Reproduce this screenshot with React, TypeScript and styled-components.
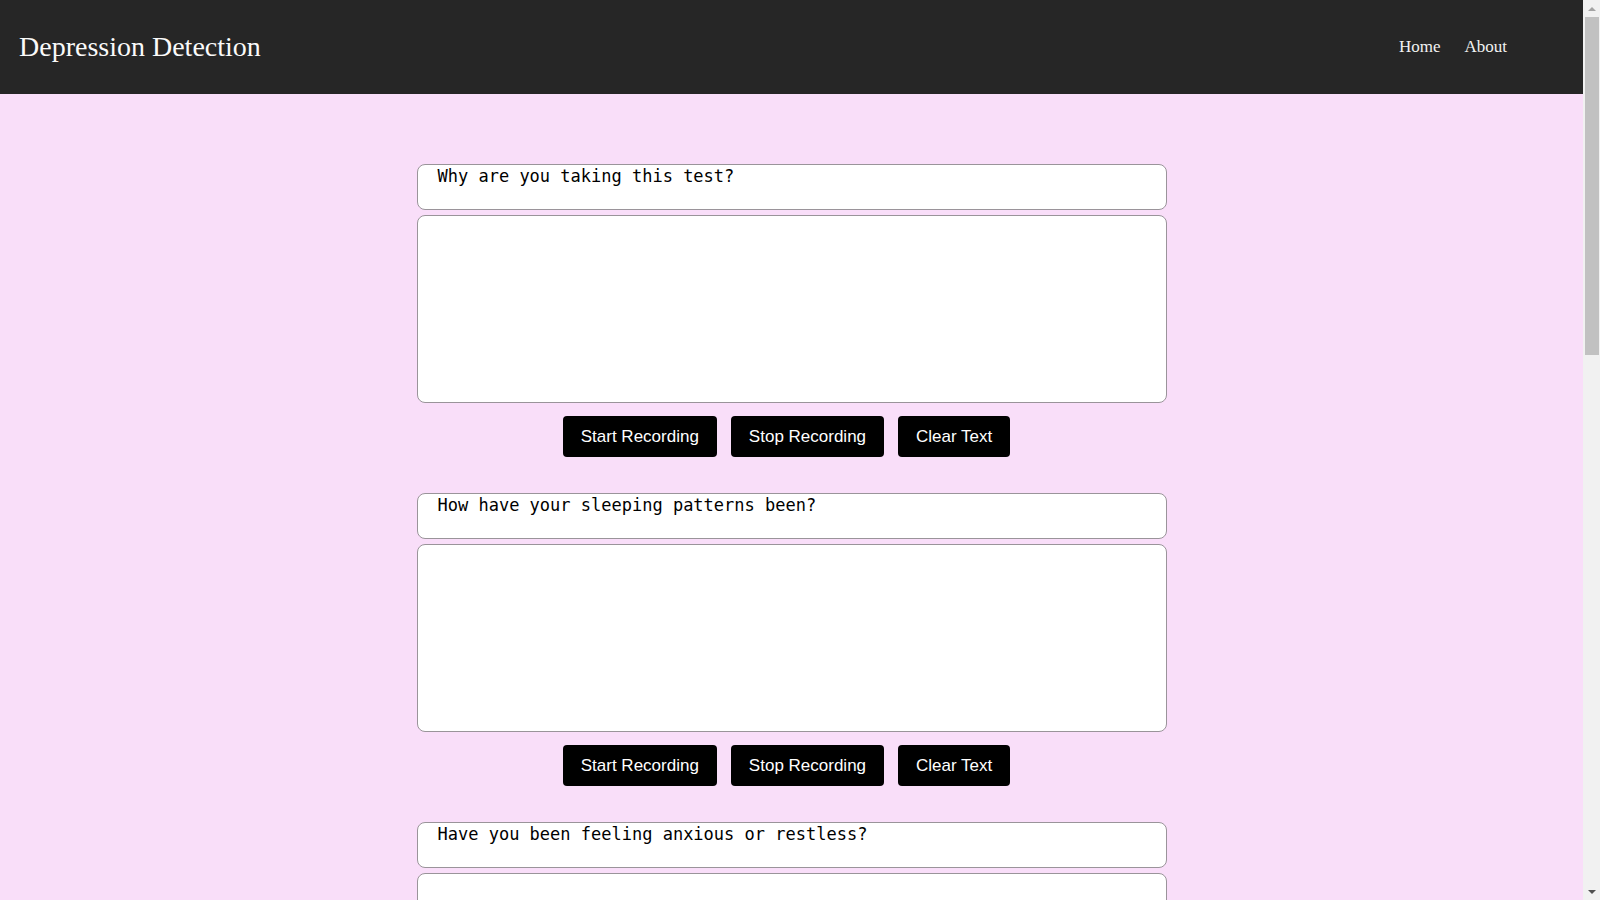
import React from "react";
import styled, { createGlobalStyle } from "styled-components";

const GlobalStyle = createGlobalStyle`
  html, body {
    margin: 0;
    padding: 0;
    background: #f9def9;
  }
  body {
    font-family: "Liberation Serif", "Times New Roman", serif;
  }
`;

const Page = styled.div`
  margin-right: 17px;
`;

const Header = styled.header`
  height: 94px;
  background: #262626;
  display: flex;
  align-items: center;
  justify-content: space-between;
  padding: 0 76px 0 19px;
`;

const Title = styled.div`
  color: #fafafa;
  font-size: 28px;
`;

const Nav = styled.nav`
  display: flex;
  gap: 24px;
  a {
    color: #f2f2f2;
    font-size: 17px;
    text-decoration: none;
  }
`;

const Main = styled.main`
  display: flex;
  flex-direction: column;
  align-items: center;
  padding: 70px 0 120px;
`;

const Question = styled.section`
  width: 750px;
  display: flex;
  flex-direction: column;
  margin-bottom: 36px;
`;

const QuestionBox = styled.div`
  box-sizing: border-box;
  height: 46px;
  background: #fff;
  border: 1px solid #9a949a;
  border-radius: 8px;
  padding: 1px 20px;
  font-family: "DejaVu Sans Mono", monospace;
  font-size: 17px;
  color: #000;
`;

const Answer = styled.textarea`
  box-sizing: border-box;
  margin-top: 5px;
  height: 188px;
  width: 100%;
  background: #fff;
  border: 1px solid #9a949a;
  border-radius: 8px;
  resize: none;
  padding: 8px 12px;
  font-family: "DejaVu Sans Mono", monospace;
  font-size: 15px;
  outline: none;
`;

const Actions = styled.div`
  display: flex;
  justify-content: center;
  gap: 14px;
  margin-top: 13px;
  padding-right: 10px;
`;

const Button = styled.button`
  background: #000;
  color: #fff;
  border: none;
  border-radius: 4px;
  font-family: "Liberation Sans", Arial, sans-serif;
  font-size: 17px;
  line-height: 21px;
  padding: 10px 18px;
  cursor: pointer;
`;

/* fake window scrollbar, drawn over the right edge */
const ScrollBar = styled.div`
  position: fixed;
  top: 0;
  right: 0;
  width: 17px;
  height: 100vh;
  background: #f1f1f1;
  display: flex;
  flex-direction: column;
`;

const Arrow = styled.div<{ $down?: boolean }>`
  height: 17px;
  display: flex;
  align-items: center;
  justify-content: center;
  margin-top: ${(p) => (p.$down ? "auto" : "0")};
  &::before {
    content: "";
    border-left: 4px solid transparent;
    border-right: 4px solid transparent;
    ${(p) =>
      p.$down
        ? "border-top: 4px solid #505050;"
        : "border-bottom: 4px solid #a3a3a3;"}
  }
`;

const Thumb = styled.div`
  height: 338px;
  margin: 0 1px 0 2px;
  background: #c1c1c1;
`;

const questions = [
  "Why are you taking this test?",
  "How have your sleeping patterns been?",
  "Have you been feeling anxious or restless?",
  "How has your appetite been lately?",
  "Do you still enjoy the things you used to?",
  "How would you describe your energy levels?",
];

const App = () => {
  return (
    <>
      <GlobalStyle />
      <Page>
        <Header>
          <Title>Depression Detection</Title>
          <Nav>
            <a href="#">Home</a>
            <a href="#">About</a>
          </Nav>
        </Header>
        <Main>
          {questions.map((q) => (
            <Question key={q}>
              <QuestionBox>{q}</QuestionBox>
              <Answer />
              <Actions>
                <Button>Start Recording</Button>
                <Button>Stop Recording</Button>
                <Button>Clear Text</Button>
              </Actions>
            </Question>
          ))}
          <Button>Submit</Button>
        </Main>
      </Page>
      <ScrollBar>
        <Arrow />
        <Thumb />
        <Arrow $down />
      </ScrollBar>
    </>
  );
};

export default App;
